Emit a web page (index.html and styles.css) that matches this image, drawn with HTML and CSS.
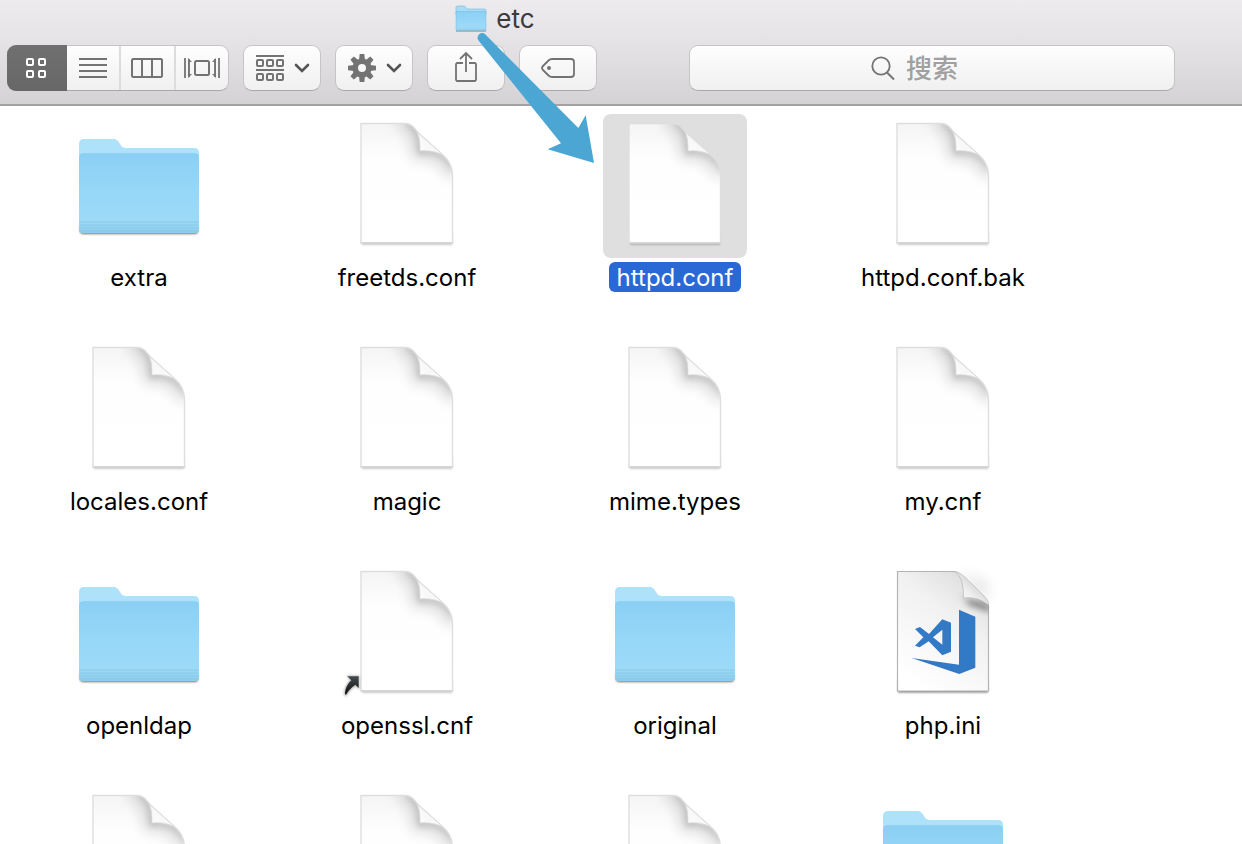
FILE: index.html
```
<!DOCTYPE html>
<html lang="zh-CN">
<head>
<meta charset="utf-8">
<title>etc</title>
<link rel="stylesheet" href="styles.css">
</head>
<body>
<svg class="defs" aria-hidden="true">
  <defs>
    <linearGradient id="folder-front" x1="0" y1="0" x2="0" y2="1">
      <stop offset="0" stop-color="#8ad0f4"/><stop offset="0.45" stop-color="#96d6f7"/><stop offset="0.85" stop-color="#9cdaf8"/><stop offset="1" stop-color="#8fcdee"/>
    </linearGradient>
    <linearGradient id="doc-shade" x1="0" y1="0" x2="0" y2="1">
      <stop offset="0" stop-color="#f5f5f5"/><stop offset="0.3" stop-color="#fefefe"/><stop offset="1" stop-color="#fff"/>
    </linearGradient>
    <linearGradient id="doc-fold" x1="0" y1="1" x2="0.6" y2="0.4">
      <stop offset="0" stop-color="#fff"/><stop offset="1" stop-color="#f5f5f5"/>
    </linearGradient>
    <linearGradient id="ini-page" x1="0.9" y1="0" x2="0.3" y2="1">
      <stop offset="0" stop-color="#d9d9d9"/><stop offset="0.4" stop-color="#f1f1f1"/><stop offset="1" stop-color="#fff"/>
    </linearGradient>
    <linearGradient id="ini-fold" x1="0" y1="1" x2="0.7" y2="0.3">
      <stop offset="0" stop-color="#fff"/><stop offset="0.55" stop-color="#f0f0f0"/><stop offset="1" stop-color="#cfcfcf"/>
    </linearGradient>
    <linearGradient id="alias-fill" x1="0" y1="0" x2="0" y2="1">
      <stop offset="0" stop-color="#444a4e"/><stop offset="1" stop-color="#111"/>
    </linearGradient>
    <filter id="soft" x="-20%" y="-20%" width="140%" height="140%"><feGaussianBlur stdDeviation="1.3"/></filter>
    <filter id="softer" x="-50%" y="-50%" width="200%" height="200%"><feGaussianBlur stdDeviation="3"/></filter>
    <filter id="softest" x="-100%" y="-100%" width="300%" height="300%"><feGaussianBlur stdDeviation="7"/></filter>
    <clipPath id="doc-clip"><path d="M26 9.500H70C77 9.500 80 15 83.500 19L108 41C115 47 117.500 54 117.500 62V129H26Z"/></clipPath>
    <clipPath id="ini-clip"><path d="M26.500 9.500H83C90 11 91 20 93 31L117.500 43V129H26.500Z"/></clipPath>
    <symbol id="folder" viewBox="0 0 144 144">
      <path d="M13 112H131V117Q131 120 128 120H16Q13 120 13 117Z" fill="#000" opacity="0.55" filter="url(#soft)"/>
      <path d="M12 30Q12 25 17 25H46C50 25 51 27 53 30S56 34 60 34H127Q132 34 132 39V60H12Z" fill="#aee2fb"/>
      <path d="M12 43Q12 39.500 16 39.500H128Q132 39.500 132 43V115Q132 119 128 119H16Q12 119 12 115Z" fill="url(#folder-front)"/>
      <path d="M12 108H132M12 111H132M12 114H132M12 117H132" stroke="#82c1e3" stroke-width="1.500" opacity="0.4"/>
      <path d="M13 41.500Q14 39.500 17 39.500H127Q130 39.500 131 41.500" fill="none" stroke="#7fc8ee" stroke-width="1" opacity="0.4"/>
    </symbol>
    <symbol id="doc" viewBox="0 0 144 144">
      <path d="M27 118H117V130.500H27Z" fill="#000" opacity="0.3" filter="url(#soft)"/>
      <path d="M26 9.500H70C77 9.500 80 15 83.500 19L108 41C115 47 117.500 54 117.500 62V129H26Z" fill="url(#doc-shade)"/>
      <g clip-path="url(#doc-clip)">
        <path d="M64 4C80 12 84 24 84 38C98 37 112 44 120 62" fill="none" stroke="#000" stroke-width="16" opacity="0.13" filter="url(#softest)"/>
        <path d="M72 7C82 13 85 26 85 38C98 36 112 41 120 56" fill="none" stroke="#000" stroke-width="4" opacity="0.2" filter="url(#softer)"/>
      </g>
      <path d="M26 9.500H70C77 9.500 80 15 83.500 19L108 41C115 47 117.500 54 117.500 62V129H26Z" fill="none" stroke="#dedede" stroke-width="1.400"/>
      <path d="M26.500 128.800H117.500" stroke="#cfcfcf" stroke-width="1.200"/>
      <path d="M82 18C85 24 85 30 85 37C94 36 102 38 108 41Z" fill="url(#doc-fold)" stroke="#dadada" stroke-width="0.800"/>
    </symbol>
    <symbol id="ini" viewBox="0 0 144 144">
      <path d="M88 12L116 20L117 40Z" fill="#000" opacity="0.12" filter="url(#softest)"/>
      <path d="M27 118H117V130.500H27Z" fill="#000" opacity="0.5" filter="url(#soft)"/>
      <path d="M26.500 9.500H83C91 11 92 20 93 30L117.500 43V129H26.500Z" fill="url(#ini-page)" stroke="#b4b4b4" stroke-width="1.200"/>
      <g clip-path="url(#ini-clip)"><path d="M88 30L92 37Q106 37 119 44V50L98 43Z" fill="#000" opacity="0.45" filter="url(#softer)"/></g>
      <path d="M83 9.500C89 9.500 95 16 99 20L112 33C115 36 118 39 117.500 43C110 37 102 35 92.500 36C92.500 25 91 13 83 9.500Z" fill="url(#ini-fold)" stroke="#bcbcbc" stroke-width="0.800"/>
      <g transform="translate(9 -2) scale(0.3333)" fill="#3279c6" fill-rule="evenodd">
        <path d="M237 149L286 170V323L238 342L95 294L237 314Z"/>
        <path d="M105 207L120 201L147 222L187 178L213 188V275L187 286L146 244L119 262L105 257L130 232ZM187 209V254L159 232Z"/>
      </g>
    </symbol>
    <symbol id="chevron" viewBox="0 0 16 10"><path d="M2 2L8 8L14 2" fill="none" stroke="#555" stroke-width="2.600" stroke-linecap="round"/></symbol>
  </defs>
</svg>

<div class="window">
  <header class="toolbar">
    <div class="title">
      <svg class="title-icon" viewBox="0 0 32 28" aria-hidden="true">
        <path d="M1 26H31" stroke="#777" stroke-width="1.500" opacity="0.6"/>
        <path d="M1 2.500Q1 1 2.500 1H9C11 1 11 4 13 4H29.500Q31 4 31 5.500V10H1Z" fill="#a7dcf6" stroke="#79b9d9" stroke-width="0.600"/>
        <path d="M1 6.500H31V24.500Q31 25.500 30 25.500H2Q1 25.500 1 24.500Z" fill="url(#folder-front)" stroke="#6db3d6" stroke-width="0.400"/>
      </svg>
      <h1>etc</h1>
    </div>
    <div class="controls">
      <div class="segments" role="group" aria-label="显示">
        <button class="segment active" type="button" aria-label="图标" aria-pressed="true">
          <svg width="20" height="20" viewBox="0 0 20 20"><g fill="none" stroke="#fff" stroke-width="2"><rect x="1" y="1" width="6" height="6" rx="1"/><rect x="13" y="1" width="6" height="6" rx="1"/><rect x="1" y="13" width="6" height="6" rx="1"/><rect x="13" y="13" width="6" height="6" rx="1"/></g></svg>
        </button>
        <button class="segment" type="button" aria-label="列表">
          <svg width="28" height="20" viewBox="0 0 28 20"><path d="M0 1H28M0 7H28M0 13H28M0 19H28" stroke="#737373" stroke-width="2"/></svg>
        </button>
        <button class="segment" type="button" aria-label="分栏">
          <svg width="32" height="20" viewBox="0 0 32 20"><path d="M2 1H30L31 2V18L30 19H2L1 18V2ZM11 1V19M21 1V19" fill="none" stroke="#737373" stroke-width="2"/></svg>
        </button>
        <button class="segment" type="button" aria-label="Cover Flow">
          <svg width="36" height="20" viewBox="0 0 36 20"><path d="M1 0V20M35 0V20M5 1V19M31 1V19" stroke="#737373" stroke-width="1.800"/><path d="M4 0L8 4H5V16H8L4 20ZM32 0L28 4H31V16H28L32 20Z" fill="#737373"/><rect x="11" y="3" width="14" height="14" rx="1.500" fill="none" stroke="#737373" stroke-width="2"/></svg>
        </button>
      </div>
      <button class="tool" type="button" aria-label="排列">
        <svg width="28" height="26" viewBox="0 0 28 26"><g fill="none" stroke="#737373" stroke-width="2"><path d="M0 1H28M0 15H28"/><rect x="1" y="5" width="6" height="6" rx="1"/><rect x="11" y="5" width="6" height="6" rx="1"/><rect x="21" y="5" width="6" height="6" rx="1"/><rect x="1" y="19" width="6" height="6" rx="1"/><rect x="11" y="19" width="6" height="6" rx="1"/><rect x="21" y="19" width="6" height="6" rx="1"/></g></svg>
        <svg width="16" height="10"><use href="#chevron"/></svg>
      </button>
      <button class="tool" type="button" aria-label="操作">
        <svg width="28" height="28" viewBox="-14 -14 28 28">
          <g fill="#737373"><path id="tooth" d="M-3 -8L-2.300 -14H2.300L3 -8Z"/><use href="#tooth" transform="rotate(45)"/><use href="#tooth" transform="rotate(90)"/><use href="#tooth" transform="rotate(135)"/><use href="#tooth" transform="rotate(180)"/><use href="#tooth" transform="rotate(225)"/><use href="#tooth" transform="rotate(270)"/><use href="#tooth" transform="rotate(315)"/></g>
          <circle r="6.800" fill="none" stroke="#737373" stroke-width="5.600"/>
        </svg>
        <svg width="16" height="10"><use href="#chevron"/></svg>
      </button>
      <button class="tool" type="button" aria-label="共享">
        <svg width="22" height="34" viewBox="0 0 22 34"><path d="M8 12H2L1 13V29L2 30H20L21 29V13L20 12H14M11 21V2M5 8L11 2L17 8" fill="none" stroke="#737373" stroke-width="1.800"/></svg>
      </button>
      <button class="tool" type="button" aria-label="标记">
        <svg width="34" height="20" viewBox="0 0 34 20"><path d="M11 1H30Q33 1 33 4V16Q33 19 30 19H11Q9 19 7.500 17.500L2 12Q0 10 2 8L7.500 2.500Q9 1 11 1Z" fill="none" stroke="#737373" stroke-width="1.800"/><circle cx="8" cy="10" r="2" fill="#737373"/></svg>
      </button>
      <label class="search">
        <svg width="24" height="24" viewBox="0 0 24 24" aria-hidden="true"><circle cx="10" cy="10" r="8.700" fill="none" stroke="#737373" stroke-width="1.800"/><path d="M16 16.500L23 23.500" stroke="#737373" stroke-width="2"/></svg>
        <input type="text" placeholder="搜索" aria-label="搜索">
      </label>
    </div>
  </header>

  <main class="files">
    <figure class="file"><svg class="icon"><use href="#folder"/></svg><figcaption>extra</figcaption></figure>
    <figure class="file"><svg class="icon"><use href="#doc"/></svg><figcaption>freetds.conf</figcaption></figure>
    <figure class="file selected"><svg class="icon"><use href="#doc"/></svg><figcaption>httpd.conf</figcaption></figure>
    <figure class="file"><svg class="icon"><use href="#doc"/></svg><figcaption>httpd.conf.bak</figcaption></figure>
    <figure class="file"><svg class="icon"><use href="#doc"/></svg><figcaption>locales.conf</figcaption></figure>
    <figure class="file"><svg class="icon"><use href="#doc"/></svg><figcaption>magic</figcaption></figure>
    <figure class="file"><svg class="icon"><use href="#doc"/></svg><figcaption>mime.types</figcaption></figure>
    <figure class="file"><svg class="icon"><use href="#doc"/></svg><figcaption>my.cnf</figcaption></figure>
    <figure class="file"><svg class="icon"><use href="#folder"/></svg><figcaption>openldap</figcaption></figure>
    <figure class="file">
      <svg class="icon" viewBox="0 0 144 144"><use href="#doc" width="144" height="144"/>
        <g transform="translate(-5 -2) scale(0.3333)"><path d="M54 349H86V384L76 376C62 386 54 396 49 406L44 403C44 385 54 370 63 361Z" fill="#777" stroke="#777" stroke-width="5" opacity="0.5" filter="url(#softer)"/><path d="M52 349H86V384L76 374C62 384 54 394 48 404L45 402C45 385 54 370 64 361Z" fill="url(#alias-fill)"/></g>
      </svg><figcaption>openssl.cnf</figcaption></figure>
    <figure class="file"><svg class="icon"><use href="#folder"/></svg><figcaption>original</figcaption></figure>
    <figure class="file"><svg class="icon"><use href="#ini"/></svg><figcaption>php.ini</figcaption></figure>
    <figure class="file"><svg class="icon"><use href="#doc"/></svg></figure>
    <figure class="file"><svg class="icon"><use href="#doc"/></svg></figure>
    <figure class="file"><svg class="icon"><use href="#doc"/></svg></figure>
    <figure class="file"><svg class="icon"><use href="#folder"/></svg></figure>
  </main>

  <svg class="pointer" viewBox="420 90 390 420" aria-hidden="true"><path d="M467 104L745 384L767 346L792 489L653 448L693 430L446 122A13 13 0 0 1 467 104Z" fill="#4ba6d3"/></svg>
</div>
</body>
</html>
```
FILE: styles.css
```
* {
  box-sizing: border-box;
}

body {
  margin: 0;
  background: #fff;
  color: #000;
  font-family: Inter, "Noto Sans CJK SC", sans-serif;
  font-size: 24px;
}

.defs {
  position: absolute;
  width: 0;
  height: 0;
}

.window {
  position: relative;
  display: flex;
  flex-direction: column;
  height: 100vh;
  overflow: hidden;
}

.toolbar {
  flex: none;
  padding: 4px 67px 13px 7px;
  background: linear-gradient(#edebee, #e5e3e6 40%, #d4d2d5);
  border-bottom: 2px solid #979598;
  border-bottom-style: double;
  border-bottom-color: #a3a1a4;
}

.title {
  display: flex;
  align-items: center;
  justify-content: center;
  gap: 9px;
  height: 30px;
  margin-right: 185px;
  margin-left: -7px;
}

.title-icon {
  width: 32px;
  height: 28px;
}

.title h1 {
  margin: 0;
  color: #3c3a3d;
  font-size: 26px;
  font-weight: 400;
  line-height: 30px;
}

.controls {
  display: flex;
  gap: 14px;
  height: 46px;
  margin-top: 11px;
}

.segments,
.tool,
.search {
  border: 1px solid #c6c4c7;
  border-bottom-color: #aaa8ab;
  border-radius: 9px;
  background: linear-gradient(#fefefe, #f0f0f0);
}

.segments {
  display: flex;
  flex: none;
  width: 222px;
}

.segment {
  display: flex;
  flex: 1;
  align-items: center;
  justify-content: center;
  padding: 0;
  border: 0;
  border-right: 2px solid #dcdcdc;
  background: none;
}

.segment:last-child {
  border-right: 0;
}

.segment.active {
  flex: none;
  width: 60px;
  margin: -1px 0 -1px -1px;
  padding-right: 2px;
  border: 0;
  border-radius: 9px 0 0 9px;
  background: linear-gradient(#707070, #676767);
}

.tool {
  display: flex;
  flex: none;
  align-items: center;
  justify-content: center;
  gap: 10px;
  width: 78px;
  padding: 0;
}

.tool svg + svg {
  margin-right: -2px;
}

.search {
  display: flex;
  flex: 1;
  align-items: center;
  justify-content: center;
  gap: 11px;
  min-width: 0;
  margin-left: 78px;
  padding-right: 31px;
}

.search input {
  width: 56px;
  padding: 2px 0 0;
  border: 0;
  outline: 0;
  background: none;
  font: inherit;
  font-size: 26px;
  line-height: 36px;
}

.search input::placeholder {
  color: #a0a0a0;
  font-weight: 500;
}

.files {
  display: grid;
  flex: 1;
  grid-template-columns: repeat(auto-fill, 268px);
  grid-auto-rows: 178px;
  gap: 46px 0;
  min-height: 0;
  padding: 8px 5px 0;
  overflow: hidden;
}

.file {
  display: flex;
  flex-direction: column;
  align-items: center;
  gap: 4px;
  margin: 0;
}

.icon {
  flex: none;
  width: 144px;
  height: 144px;
  border-radius: 8px;
}

.file figcaption {
  padding: 2px 8px 0;
  border-radius: 6px;
  line-height: 28px;
}

.selected .icon {
  background: #dfdfdf;
}

.selected figcaption {
  background: #2a69d5;
  color: #fff;
}

.pointer {
  position: absolute;
  top: 30px;
  left: 470px;
  width: 130px;
  height: 140px;
}
```
